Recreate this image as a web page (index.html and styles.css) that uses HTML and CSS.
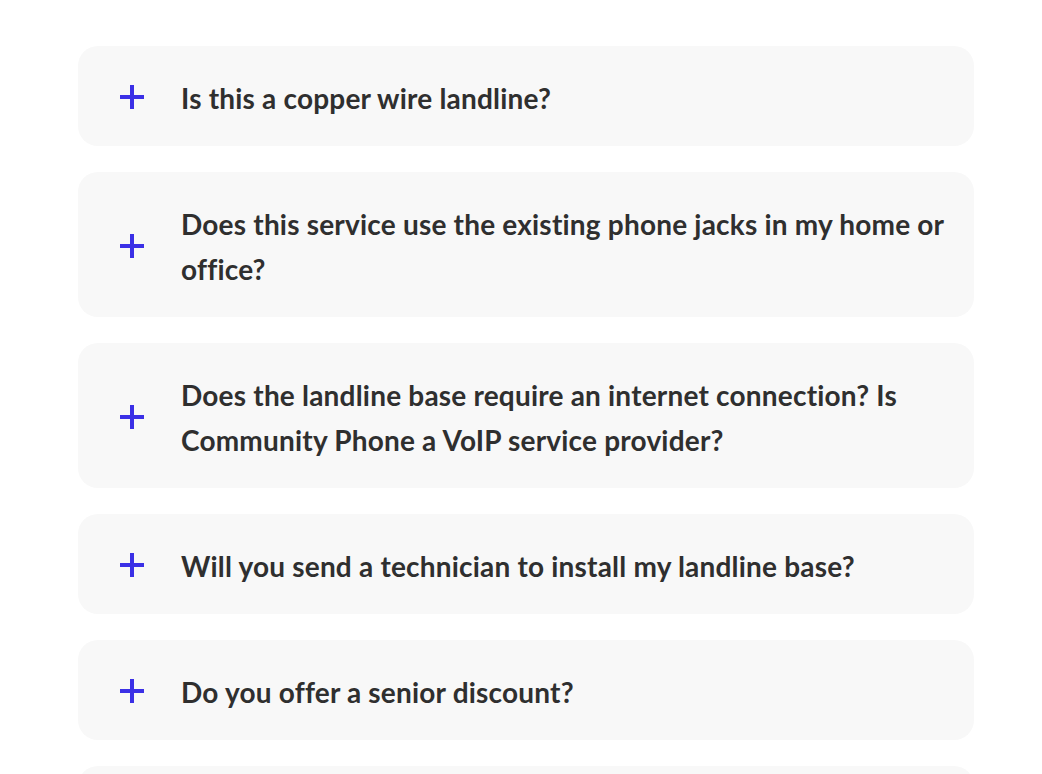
FILE: index.html
```html
<!DOCTYPE html>
<html lang="en">
<head>
  <meta charset="UTF-8" />
  <meta name="viewport" content="width=device-width, initial-scale=1" />
  <title>FAQ</title>
  <link rel="stylesheet" href="styles.css">
</head>
<body>
  <div class="faq">
    <div class="faq-item">
      <span class="plus"></span>
      <p class="question">Is this a copper wire landline?</p>
    </div>
    <div class="faq-item">
      <span class="plus"></span>
      <p class="question">Does this service use the existing phone jacks in my home or office?</p>
    </div>
    <div class="faq-item">
      <span class="plus"></span>
      <p class="question">Does the landline base require an internet connection? Is Community Phone a VoIP service provider?</p>
    </div>
    <div class="faq-item">
      <span class="plus"></span>
      <p class="question">Will you send a technician to install my landline base?</p>
    </div>
    <div class="faq-item">
      <span class="plus"></span>
      <p class="question">Do you offer a senior discount?</p>
    </div>
    <div class="faq-item">
      <span class="plus"></span>
    </div>
  </div>
</body>
</html>
```

FILE: styles.css
```css
body {
  margin: 0;
  background-color: #fff;
  font-family: 'Lato', 'Noto Sans', sans-serif;
  color: #2f2f2f;
}

.faq {
  width: 896px;
  margin: 46px 0 0 78px;
  display: flex;
  flex-direction: column;
  gap: 26px;
}

.faq-item {
  display: flex;
  align-items: center;
  min-height: 48px;
  background-color: #f8f8f8;
  border-radius: 20px;
  padding: 27px 24px 25px 42px;
}

.plus {
  position: relative;
  flex: 0 0 24px;
  width: 24px;
  height: 24px;
  margin-right: 37px;
}
.plus::before,
.plus::after {
  content: "";
  position: absolute;
  background-color: #3b30e6;
}
.plus::before {
  left: 0;
  top: 10px;
  width: 24px;
  height: 4px;
}
.plus::after {
  left: 10px;
  top: 0;
  width: 4px;
  height: 24px;
}

.question {
  margin: 0;
  padding-top: 3px;
  font-size: 28px;
  font-weight: 700;
  line-height: 45px;
  letter-spacing: 0.2px;
}
```
